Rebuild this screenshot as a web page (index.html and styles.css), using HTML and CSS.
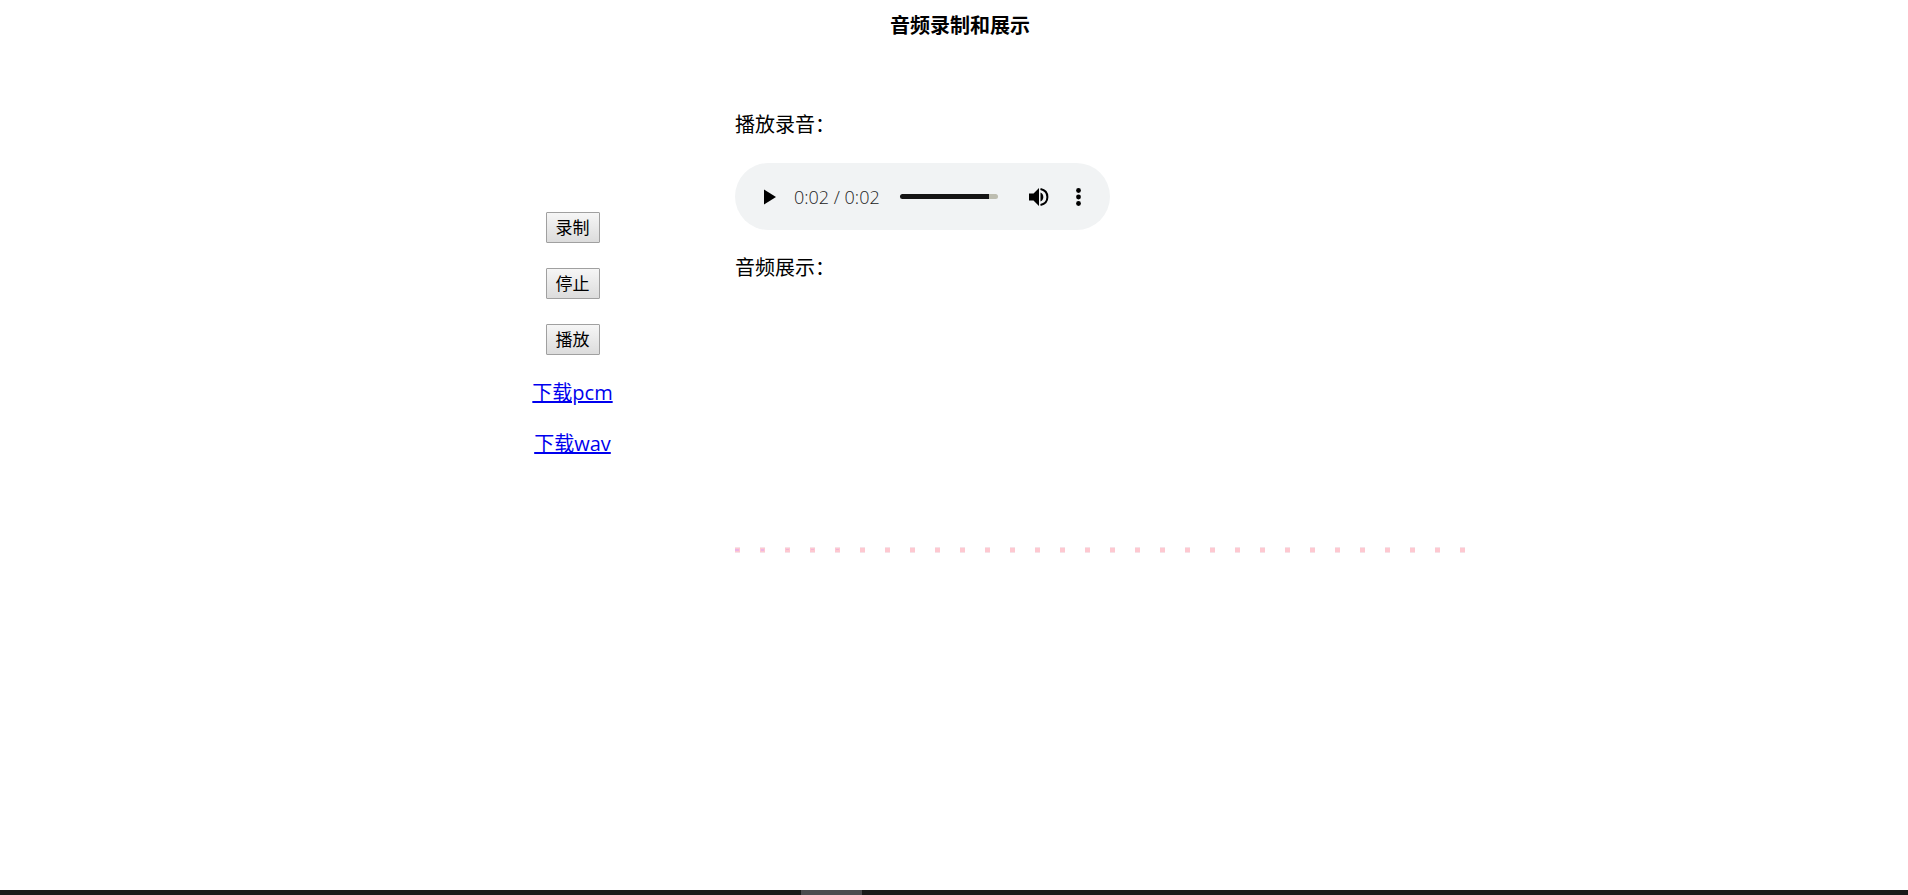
FILE: index.html
```html
<!DOCTYPE html>
<html lang="zh-CN">
<head>
<meta charset="utf-8">
<title>音频录制和展示</title>
<link rel="stylesheet" href="styles.css">
</head>
<body>

<div class="page">
	<h1>音频录制和展示</h1>
	<div class="content">
		<div class="left">
			<button type="button">录制</button>
			<button type="button">停止</button>
			<button type="button">播放</button>
			<a href="#pcm">下载pcm</a>
			<a href="#wav">下载wav</a>
		</div>
		<div class="right">
			<div>播放录音：</div>
			<!-- 播放器 -->
			<div class="player">
				<button type="button" class="icon" aria-label="播放"><svg width="12" height="16" viewBox="0 0 12 16"><path d="M0 0.5v15L12 8z"/></svg></button>
				<span class="time">0:02 / 0:02</span>
				<input type="range" class="progress" min="0" max="100" value="91" aria-label="进度">
				<button type="button" class="icon volume" aria-label="音量"><svg width="20" height="20" viewBox="0 0 20 20"><path d="M0 6.500h4.500L10 1v18l-5.500-5.500H0z"/><path d="M11.500 5.500c3.800 1.600 3.800 7.400 0 9z"/><path d="M11.500 2c9.200 2 9.200 14 0 16" fill="none" stroke="#000" stroke-width="2"/></svg></button>
				<button type="button" class="icon" aria-label="更多"><svg width="5" height="18" viewBox="0 0 5 18"><circle cx="2.500" cy="2.500" r="2.400"/><circle cx="2.500" cy="9" r="2.400"/><circle cx="2.500" cy="15.500" r="2.400"/></svg></button>
			</div>
			<div>音频展示：</div>
			<!-- 频谱 -->
			<svg class="wave" width="750" height="250">
				<defs>
					<pattern id="bar" width="25" height="250" patternUnits="userSpaceOnUse">
						<rect y="241" width="5" height="6" fill="#f6e2e8"/>
						<rect y="242" width="5" height="4" fill="#fec8d0"/>
					</pattern>
				</defs>
				<rect width="750" height="250" fill="url(#bar)"/>
				<rect x="0" y="243" width="4" height="2" fill="#edb4e4"/>
				<rect x="26" y="243" width="3" height="2" fill="#edb4e4"/>
				<rect x="51" y="243" width="3" height="1" fill="#f3b4d6"/>
				<rect x="76" y="243" width="3" height="1" fill="#f3b4d6"/>
				<rect x="101" y="243" width="3" height="1" fill="#f3b4d6"/>
			</svg>
		</div>
	</div>
</div>

<div class="bottom"><div class="active"></div></div>

</body>
</html>
```
FILE: styles.css
```css
* {
box-sizing: border-box;
}
body {
margin: 0;
min-height: 100vh;
display: flex;
flex-direction: column;
background: #fff;
color: #000;
font: 20px/26px "Open Sans", "Noto Sans CJK SC", sans-serif;
}
.page {
padding: 13px 0 0 12px;
}
h1 {
margin: 0;
font-size: 20px;
line-height: 26px;
text-align: center;
}
.content {
display: flex;
max-width: 1100px;
margin: 73px auto 0;
}
.left {
width: 325px;
padding-top: 100px;
display: flex;
flex-direction: column;
align-items: center;
gap: 25px;
}
.left button {
height: 31px;
padding: 0 9px 2px;
border: 1px solid #a0a0a0;
border-radius: 1px;
background: linear-gradient(#f6f6f6, #dcdcdc);
color: #000;
font: 17px/26px "Noto Sans CJK SC", sans-serif;
}
a {
color: #0000ee;
}
.right {
flex: 1;
display: flex;
flex-direction: column;
gap: 25px;
}
.player {
width: 375px;
height: 67px;
padding: 0 29px;
display: flex;
align-items: center;
border-radius: 34px;
background: #f1f3f4;
}
.icon {
display: flex;
padding: 0;
border: 0;
background: none;
}
.time {
margin: 0 20px 0 18px;
color: #222;
font-size: 18px;
font-weight: 300;
white-space: nowrap;
}
.progress {
appearance: none;
flex: 1;
min-width: 0;
height: 5px;
margin: 0;
border-radius: 3px;
background: linear-gradient(to right, #141414 91%, #bdbdb0 91%);
}
.progress::-webkit-slider-thumb {
appearance: none;
width: 0;
height: 0;
}
.volume {
margin: 0 27px 0 31px;
}
.wave {
display: block;
}
.bottom {
height: 5px;
margin-top: auto;
background: #191919;
}
.active {
width: 61px;
height: 5px;
margin-left: 42%;
background: #4b4a4e;
}
```
